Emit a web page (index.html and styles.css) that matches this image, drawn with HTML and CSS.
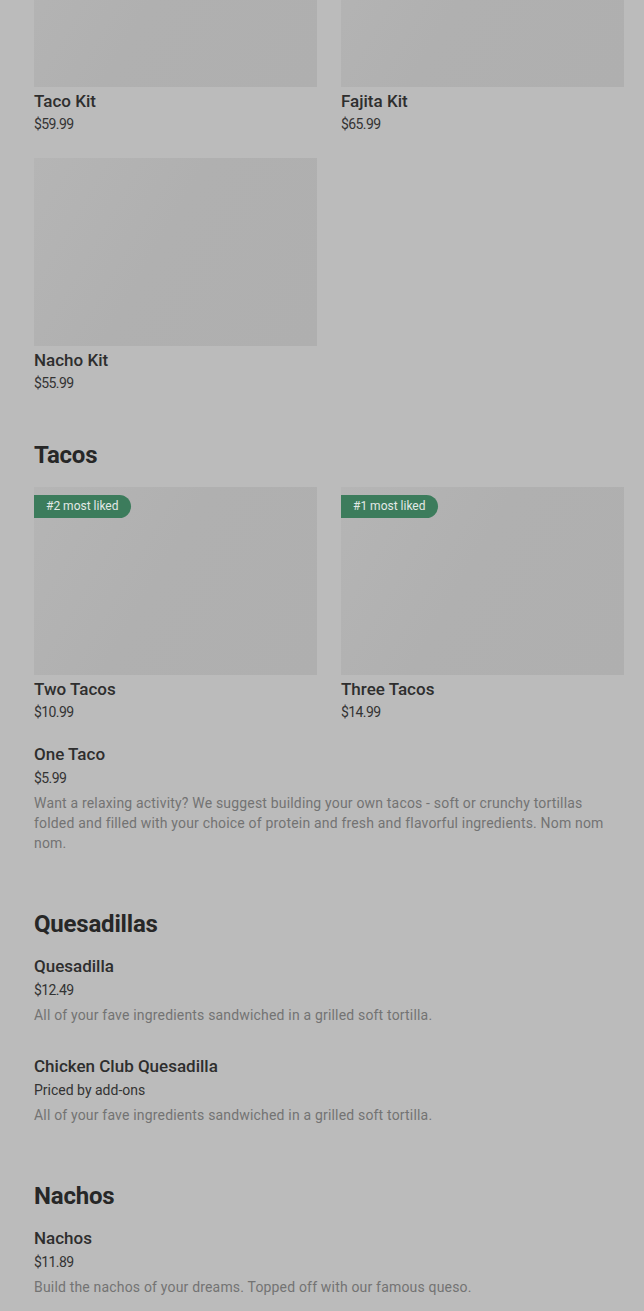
FILE: index.html
```html
<!DOCTYPE html>
<html lang="en">
<head>
<meta charset="utf-8">
<title>Menu</title>
<link rel="stylesheet" href="styles.css">
</head>
<body>
<main class="menu">
  <section class="section section-first">
    <div class="grid">
      <div class="card">
        <div class="thumb"></div>
        <div class="name">Taco Kit</div>
        <div class="price num">$59.99</div>
      </div>
      <div class="card">
        <div class="thumb"></div>
        <div class="name">Fajita Kit</div>
        <div class="price num">$65.99</div>
      </div>
      <div class="card">
        <div class="thumb"></div>
        <div class="name">Nacho Kit</div>
        <div class="price num">$55.99</div>
      </div>
    </div>
  </section>

  <section class="section">
    <h2 class="heading">Tacos</h2>
    <div class="grid grid-spaced">
      <div class="card">
        <div class="thumb"><span class="badge">#2 most liked</span></div>
        <div class="name">Two Tacos</div>
        <div class="price num">$10.99</div>
      </div>
      <div class="card">
        <div class="thumb"><span class="badge">#1 most liked</span></div>
        <div class="name">Three Tacos</div>
        <div class="price num">$14.99</div>
      </div>
    </div>
    <div class="item">
      <div class="name">One Taco</div>
      <div class="price num">$5.99</div>
      <p class="desc">Want a relaxing activity? We suggest building your own tacos - soft or crunchy tortillas folded and filled with your choice of protein and fresh and flavorful ingredients. Nom nom nom.</p>
    </div>
  </section>

  <section class="section">
    <h2 class="heading">Quesadillas</h2>
    <div class="item">
      <div class="name">Quesadilla</div>
      <div class="price num">$12.49</div>
      <p class="desc">All of your fave ingredients sandwiched in a grilled soft tortilla.</p>
    </div>
    <div class="item">
      <div class="name">Chicken Club Quesadilla</div>
      <div class="price">Priced by add-ons</div>
      <p class="desc">All of your fave ingredients sandwiched in a grilled soft tortilla.</p>
    </div>
  </section>

  <section class="section">
    <h2 class="heading">Nachos</h2>
    <div class="item">
      <div class="name">Nachos</div>
      <div class="price num">$11.89</div>
      <p class="desc">Build the nachos of your dreams. Topped off with our famous queso.</p>
    </div>
  </section>
</main>
</body>
</html>
```

FILE: styles.css
```css
html, body {
  margin: 0;
  padding: 0;
  background: #bbbbbb;
}

body {
  font-family: Roboto, "Liberation Sans", sans-serif;
  color: #262626;
  overflow: hidden;
}

.menu {
  display: flex;
  flex-direction: column;
  padding: 0 20px 0 34px;
}

.section {
  display: flex;
  flex-direction: column;
  margin-top: 26px;
}

.section-first {
  margin-top: -101px;
}

.heading {
  margin: 0 0 14px;
  font-size: 24px;
  line-height: 32px;
  font-weight: 700;
  letter-spacing: -0.2px;
  color: #272727;
}

.grid {
  display: grid;
  grid-template-columns: 1fr 1fr;
  column-gap: 24px;
  row-gap: 23px;
  margin-bottom: 19px;
}

.grid-spaced {
  margin-top: 2px;
}

.card {
  display: flex;
  flex-direction: column;
}

.thumb {
  position: relative;
  height: 188px;
  background: linear-gradient(120deg, #b5b5b5 0%, #b0b0b0 45%, #afafaf 100%);
  margin-bottom: 2px;
}

.badge {
  position: absolute;
  left: 0;
  top: 8px;
  height: 23px;
  line-height: 23px;
  padding: 0 12px;
  border-radius: 0 12px 12px 0;
  background: #3c7c5c;
  color: #e3e9e6;
  font-size: 12px;
}

.name {
  font-size: 17px;
  line-height: 24px;
  font-weight: 500;
  color: #2e2e2e;
}

.price {
  font-size: 14px;
  line-height: 22px;
  color: #333333;
}

.num {
  letter-spacing: -0.6px;
}

.item {
  padding-bottom: 29px;
}

.item .price {
  line-height: 24px;
}

.desc {
  margin: 3px 0 0;
  font-size: 14px;
  line-height: 20px;
  letter-spacing: 0.18px;
  color: #737373;
}
```
